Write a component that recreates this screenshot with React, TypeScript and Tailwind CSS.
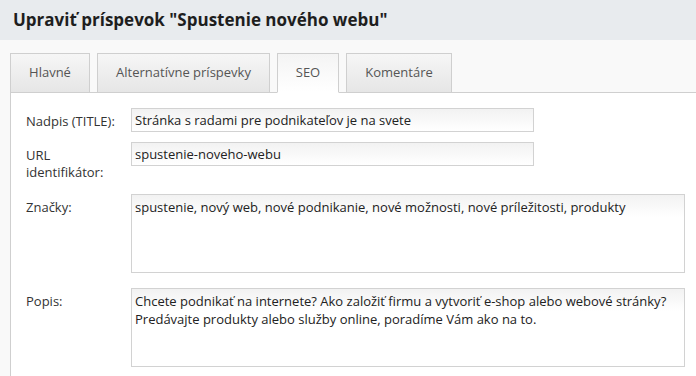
import React from 'react';

const tabs = [
    { label: 'Hlavné', w: 'w-[80px]', active: false },
    { label: 'Alternatívne príspevky', w: 'w-[173px]', active: false },
    { label: 'SEO', w: 'w-[62px]', active: true },
    { label: 'Komentáre', w: 'w-[106px]', active: false },
];

const inputCls =
    'h-[24px] border border-[#d2d2d2] bg-[linear-gradient(#f2f2f2,#ffffff)] px-[3px] text-[13px] text-[#222] outline-none';

const areaCls =
    'w-[554px] h-[79px] resize-none border border-[#d2d2d2] bg-[linear-gradient(#f2f2f2,#ffffff_22px)] px-[3px] pt-[3px] text-[13px] leading-[18px] text-[#222] outline-none';

export default function App() {
    return (
        <div className="w-[696px] h-[376px] overflow-hidden bg-[#f9f9f9] font-['Open_Sans',sans-serif]">
            {/* Header */}
            <div className="h-[40px] bg-[#e8ebee] px-[13px] flex items-center">
                <h1 className="text-[17px] font-bold text-[#1e1e1e] tracking-[0px]">
                    Upraviť príspevok "Spustenie nového webu"
                </h1>
            </div>

            {/* Tabs */}
            <div className="pl-[10px] pt-[13px] flex gap-[7px] items-end">
                {tabs.map((t) => (
                    <div
                        key={t.label}
                        className={`${t.w} flex items-center justify-center text-[13px] text-[#555] border border-[#cfcfcf] ${
                            t.active
                                ? 'h-[40px] -mb-px border-b-white bg-[linear-gradient(#f4f4f4,#ffffff)] relative z-10'
                                : 'h-[39px] border-b-0 bg-[linear-gradient(#f6f6f6,#e6e6e6)]'
                        }`}
                    >
                        {t.label}
                    </div>
                ))}
            </div>

            {/* Panel */}
            <div className="ml-[10px] border-l border-t border-[#cfcfcf] bg-white pl-[15px] pt-[15px] h-[300px] text-[13px] text-[#333]">
                <div className="flex items-start mb-[10px]">
                    <label className="w-[105px] pt-[5px] leading-[17px]">Nadpis (TITLE):</label>
                    <input
                        className={`${inputCls} w-[403px]`}
                        defaultValue="Stránka s radami pre podnikateľov je na svete"
                    />
                </div>
                <div className="flex items-start mb-[10px]">
                    <label className="w-[105px] pt-[5px] pb-[3px] leading-[17px]">
                        URL
                        <br />
                        identifikátor:
                    </label>
                    <input className={`${inputCls} w-[403px]`} defaultValue="spustenie-noveho-webu" />
                </div>
                <div className="flex items-start mb-[15px]">
                    <label className="w-[105px] pt-[4px] leading-[18px]">Značky:</label>
                    <textarea
                        className={areaCls}
                        defaultValue="spustenie, nový web, nové podnikanie, nové možnosti, nové príležitosti, produkty"
                    />
                </div>
                <div className="flex items-start">
                    <label className="w-[105px] pt-[4px] leading-[18px]">Popis:</label>
                    <textarea
                        className={areaCls}
                        defaultValue="Chcete podnikať na internete? Ako založiť firmu a vytvoriť e-shop alebo webové stránky? Predávajte produkty alebo služby online, poradíme Vám ako na to."
                    />
                </div>
            </div>
        </div>
    );
}
